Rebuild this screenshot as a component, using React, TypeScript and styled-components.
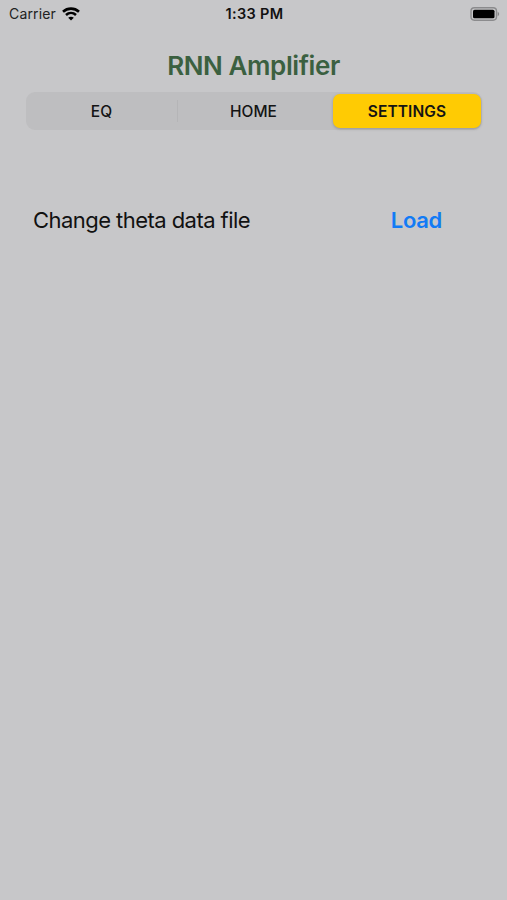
import React from "react";
import styled, { createGlobalStyle } from "styled-components";

const GlobalStyle = createGlobalStyle`
  * { box-sizing: border-box; }
  body { margin: 0; background: #c7c7c9; }
`;

const Screen = styled.main`
  display: flex;
  flex-direction: column;
  width: 507px;
  height: 900px;
  background: #c7c7c9;
  color: #111;
  font-family: Inter, "Liberation Sans", sans-serif;
  white-space: nowrap;
`;

const StatusBar = styled.header`
  display: grid;
  grid-template-columns: 1fr auto 1fr;
  align-items: center;
  height: 27px;
  padding: 0 7px 0 9px;
`;

const Carrier = styled.div`
  display: flex;
  align-items: center;
  gap: 6px;
  font-size: 14px;
  color: #222;
  letter-spacing: 0.15px;
`;

const Clock = styled.time`
  font-size: 14.5px;
  font-weight: 600;
  letter-spacing: 0.35px;
  color: #111;
`;

const Battery = styled.svg`
  justify-self: end;
`;

const Title = styled.h1`
  margin: 23px 0 0;
  font-size: 26px;
  line-height: 32px;
  font-weight: 600;
  letter-spacing: -0.4px;
  text-align: center;
  color: #3b6040;
`;

const Segments = styled.nav`
  display: grid;
  grid-template-columns: 151px 1px 155px 148px;
  align-items: center;
  height: 38px;
  margin: 10px 25px 0 26px;
  border-radius: 9px;
  background: #bebec0;
`;

const Segment = styled.button<{ $active?: boolean }>`
  height: 34px;
  padding: 0;
  border: 0;
  border-radius: 7px;
  background: ${(p) => (p.$active ? "#ffcb03" : "transparent")};
  box-shadow: ${(p) => (p.$active ? "0 1px 3px rgba(0,0,0,.22)" : "none")};
  color: #141414;
  font: ${(p) => (p.$active ? 600 : 500)} 15.5px Inter, "Liberation Sans", sans-serif;
  letter-spacing: ${(p) => (p.$active ? "0.1px" : "0")};
`;

const MiddleSegment = styled(Segment)`
  padding-right: 4px;
`;

const Divider = styled.span`
  height: 22px;
  background: #b5b5b7;
`;

const SettingRow = styled.section`
  display: flex;
  align-items: center;
  justify-content: space-between;
  height: 40px;
  margin: 70px 65px 0 33px;
`;

const Label = styled.span`
  font-size: 22px;
  letter-spacing: -0.55px;
`;

const LoadButton = styled.button`
  padding: 0;
  border: 0;
  background: none;
  color: #127bf5;
  font: 600 22px Inter, "Liberation Sans", sans-serif;
  letter-spacing: -0.3px;
`;

export default function App() {
  return (
    <Screen>
      <GlobalStyle />
      <StatusBar>
        <Carrier>
          <span>Carrier</span>
          <svg width="18" height="14" viewBox="0 0 18 14" fill="none" stroke="#000" strokeWidth="2.6">
            <path d="M1 4.8C5.6.6 12.4.6 17 4.8M4 8c2.9-2.6 7.1-2.6 10 0" />
            <path d="M9 13.5 6.2 10.7c1.6-1.4 4-1.4 5.6 0Z" fill="#000" stroke="none" />
          </svg>
        </Carrier>
        <Clock>1:33 PM</Clock>
        <Battery width="30" height="14" viewBox="0 0 30 14">
          <rect x="1" y=".8" width="25.5" height="12.4" rx="3.4" fill="none" stroke="#8b8b8d" strokeWidth="1.4" />
          <rect x="3" y="2.7" width="21.5" height="8.6" rx="1.6" fill="#000" />
          <path d="M27.7 4.8c2 .8 2 3.6 0 4.4Z" fill="#858587" />
        </Battery>
      </StatusBar>
      <Title>RNN Amplifier</Title>
      <Segments>
        <Segment>EQ</Segment>
        <Divider />
        <MiddleSegment>HOME</MiddleSegment>
        <Segment $active>SETTINGS</Segment>
      </Segments>
      <SettingRow>
        <Label>Change theta data file</Label>
        <LoadButton>Load</LoadButton>
      </SettingRow>
    </Screen>
  );
}
